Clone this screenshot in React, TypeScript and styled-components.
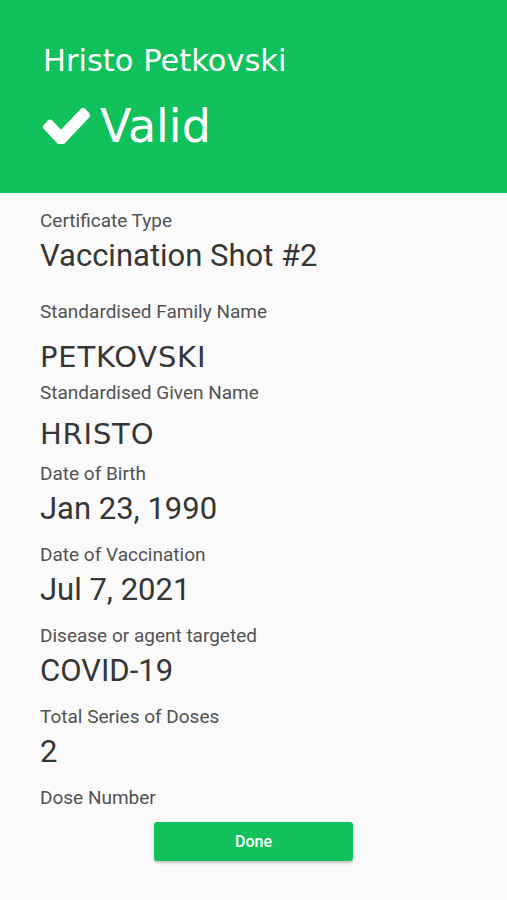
import React from 'react';
import styled, { createGlobalStyle } from 'styled-components';

const GlobalStyle = createGlobalStyle`
  html, body {
    margin: 0;
    padding: 0;
    background: #fafafa;
  }
  * {
    box-sizing: border-box;
  }
`;

const Screen = styled.div`
  width: 507px;
  height: 900px;
  display: flex;
  flex-direction: column;
  background: #fafafa;
  overflow: hidden;
`;

const Header = styled.header`
  height: 193px;
  background-color: #11c15b;
  padding: 43px 0 0 43px;
  display: flex;
  flex-direction: column;
  color: #fff;
  font-family: 'DejaVu Sans', sans-serif;
`;

const HolderName = styled.div`
  font-size: 30.5px;
  line-height: 35px;
`;

const StatusRow = styled.div`
  display: flex;
  align-items: center;
  gap: 10px;
  margin-top: 21px;
`;

const StatusText = styled.div`
  font-size: 46px;
  line-height: 54px;
`;

const Details = styled.main`
  padding: 16px 40px 0;
  display: flex;
  flex-direction: column;
  font-family: Roboto, 'Liberation Sans', sans-serif;
`;

const Field = styled.div<{ $after: number }>`
  display: flex;
  flex-direction: column;
  margin-bottom: ${(props) => props.$after}px;
`;

const Label = styled.div`
  font-size: 19px;
  line-height: 24px;
  color: #525252;
`;

// names are shown in the wider sans, everything else in Roboto
const Value = styled.div<{ $name?: boolean; $before: number }>`
  font-family: ${(props) => (props.$name ? "'DejaVu Sans', sans-serif" : "Roboto, 'Liberation Sans', sans-serif")};
  font-size: ${(props) => (props.$name ? 29 : 31)}px;
  letter-spacing: ${(props) => (props.$name ? '0.8px' : 'normal')};
  line-height: 40px;
  margin-top: ${(props) => props.$before}px;
  color: #363636;
`;

const Footer = styled.div`
  display: flex;
  justify-content: center;
  padding-top: 12px;
`;

const DoneButton = styled.button`
  width: 199px;
  height: 39px;
  border: none;
  border-radius: 3px;
  background-color: #11c15b;
  color: #fff;
  font-family: Roboto, 'Liberation Sans', sans-serif;
  font-weight: 500;
  font-size: 16px;
  box-shadow: 0 2px 3px rgba(0, 0, 0, 0.22);
  cursor: pointer;
`;

const CheckIcon = () => (
  <svg width="47" height="36" viewBox="121 342 1550 1116" preserveAspectRatio="none">
    <path
      fill="#fff"
      d="M1671 566q0 40-28 68l-724 724-136 136q-28 28-68 28t-68-28l-136-136-362-362q-28-28-28-68t28-68l136-136q28-28 68-28t68 28l294 295 656-657q28-28 68-28t68 28l136 136q28 28 28 68z"
    />
  </svg>
);

interface Row {
  label: string;
  value?: string;
  name?: boolean;
  before: number;
  after: number;
}

const rows: Row[] = [
  { label: 'Certificate Type', value: 'Vaccination Shot #2', before: 3, after: 24 },
  { label: 'Standardised Family Name', value: 'PETKOVSKI', name: true, before: 13, after: 4 },
  { label: 'Standardised Given Name', value: 'HRISTO', name: true, before: 9, after: 8 },
  { label: 'Date of Birth', value: 'Jan 23, 1990', before: 3, after: 14 },
  { label: 'Date of Vaccination', value: 'Jul 7, 2021', before: 3, after: 14 },
  { label: 'Disease or agent targeted', value: 'COVID-19', before: 3, after: 14 },
  { label: 'Total Series of Doses', value: '2', before: 3, after: 14 },
  { label: 'Dose Number', before: 0, after: 0 },
];

export default function App() {
  return (
    <>
      <GlobalStyle />
      <Screen>
        <Header>
          <HolderName>Hristo Petkovski</HolderName>
          <StatusRow>
            <CheckIcon />
            <StatusText>Valid</StatusText>
          </StatusRow>
        </Header>
        <Details>
          {rows.map((row) => (
            <Field key={row.label} $after={row.after}>
              <Label>{row.label}</Label>
              {row.value && (
                <Value $name={row.name} $before={row.before}>
                  {row.value}
                </Value>
              )}
            </Field>
          ))}
        </Details>
        <Footer>
          <DoneButton>Done</DoneButton>
        </Footer>
      </Screen>
    </>
  );
}
